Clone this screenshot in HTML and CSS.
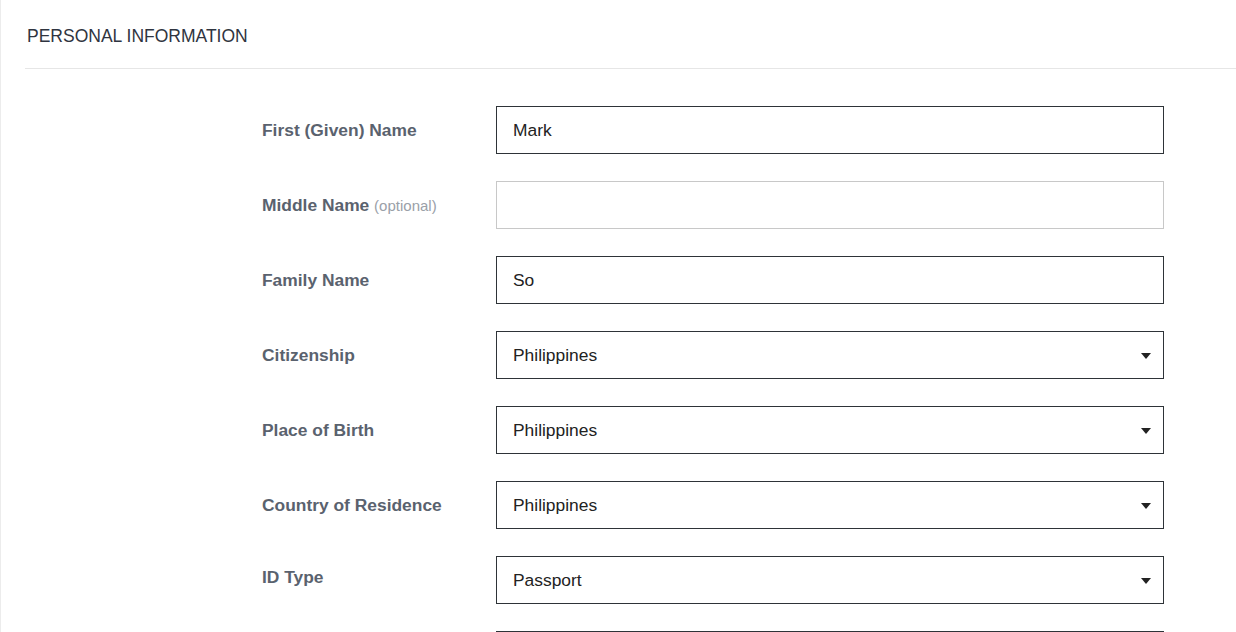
FILE: index.html
```html
<!DOCTYPE html>
<html>
<head>
<meta charset="utf-8">
<link rel="stylesheet" href="styles.css">
</head>
<body>
<div class="page">
  <div class="section-head">PERSONAL INFORMATION</div>
  <form class="form">
    <div class="row">
      <label class="label">First (Given) Name</label>
      <div class="field"><span class="value">Mark</span></div>
    </div>
    <div class="row">
      <label class="label">Middle Name <span class="opt">(optional)</span></label>
      <div class="field empty"></div>
    </div>
    <div class="row">
      <label class="label">Family Name</label>
      <div class="field"><span class="value">So</span></div>
    </div>
    <div class="row">
      <label class="label">Citizenship</label>
      <div class="field select"><span class="value">Philippines</span><span class="caret"></span></div>
    </div>
    <div class="row">
      <label class="label">Place of Birth</label>
      <div class="field select"><span class="value">Philippines</span><span class="caret"></span></div>
    </div>
    <div class="row">
      <label class="label">Country of Residence</label>
      <div class="field select"><span class="value">Philippines</span><span class="caret"></span></div>
    </div>
    <div class="row">
      <label class="label label-up">ID Type</label>
      <div class="field select"><span class="value">Passport</span><span class="caret"></span></div>
    </div>
    <div class="row">
      <label class="label"></label>
      <div class="field"></div>
    </div>
  </form>
</div>
</body>
</html>
```
FILE: styles.css
```css
html, body {
  margin: 0;
  padding: 0;
  background: #fff;
  height: 632px;
  overflow: hidden;
}
body {
  font-family: "Liberation Sans", Arial, sans-serif;
  color: #333;
}
.page {
  border-left: 1px solid #ececec;
  padding-left: 24px;
  height: 632px;
  box-sizing: border-box;
  overflow: hidden;
}
.section-head {
  height: 69px;
  box-sizing: border-box;
  padding-left: 2px;
  padding-top: 26px;
  font-size: 17.5px;
  line-height: 20px;
  color: #2f3440;
  border-bottom: 1px solid #e6e6e6;
}
.form {
  margin-top: 37px;
  padding-left: 237px;
  display: flex;
  flex-direction: column;
  gap: 27px;
}
.row {
  display: grid;
  grid-template-columns: 234px 668px;
  align-items: center;
}
.label {
  font-weight: bold;
  font-size: 17.4px;
  color: #5a626e;
}
.label-up {
  margin-top: -6px;
}
.opt {
  font-weight: normal;
  font-size: 15px;
  color: #9aa0a8;
}
.field {
  height: 48px;
  box-sizing: border-box;
  border: 1px solid #2e3338;
  display: flex;
  align-items: center;
  padding-left: 16px;
  padding-right: 12px;
  font-size: 17.4px;
  color: #222;
}
.field.empty {
  border-color: #c8c8c8;
}
.value {
  flex: 1;
}
.caret {
  width: 0;
  height: 0;
  border-left: 5px solid transparent;
  border-right: 5px solid transparent;
  border-top: 6px solid #222;
  margin-top: 2px;
}
```
